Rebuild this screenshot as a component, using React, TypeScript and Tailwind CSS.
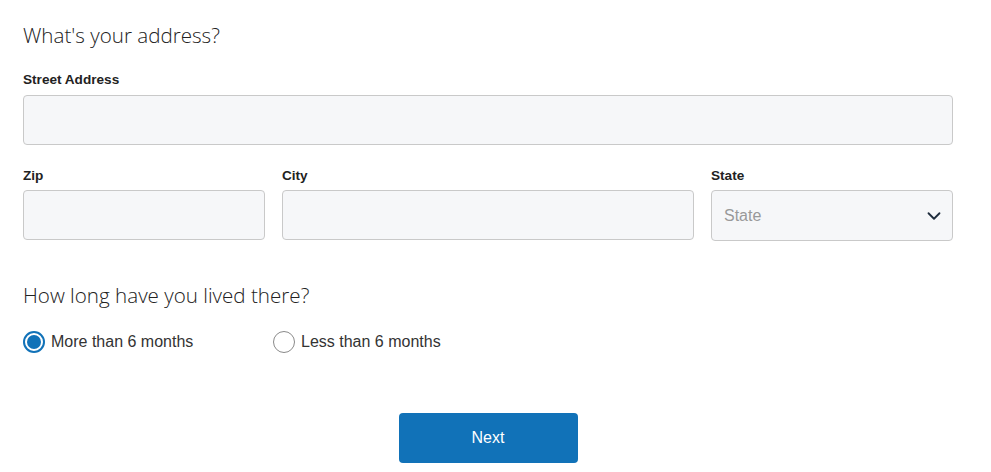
import React, { useState } from "react";
import { ChevronDown } from "lucide-react";

const heading = "font-['Open_Sans',sans-serif] font-light text-[20.6px] leading-[28px] text-[#222]";
const label = "block font-['Liberation_Sans',Arial,sans-serif] font-bold text-[13.6px] leading-[16px] text-[#222]";
const field =
  "w-full h-[50px] rounded-[4px] border border-[#c9c9c9] bg-[#f6f7f9] px-3 font-['Liberation_Sans',Arial,sans-serif] text-[16px] text-[#333] outline-none";

function Radio({ checked, text, onClick }: { checked: boolean; text: string; onClick: () => void }) {
  return (
    <button type="button" onClick={onClick} className="flex items-center gap-[6px] w-[250px]">
      {checked ? (
        <span className="flex items-center justify-center w-[22px] h-[22px] rounded-full border-2 border-[#1172b8] bg-white">
          <span className="w-[14px] h-[14px] rounded-full bg-[#1172b8]" />
        </span>
      ) : (
        <span className="w-[22px] h-[22px] rounded-full border border-[#8a8a8a] bg-white" />
      )}
      <span className="font-['Liberation_Sans',Arial,sans-serif] text-[16px] text-[#333]">{text}</span>
    </button>
  );
}

export default function App() {
  const [duration, setDuration] = useState("more");

  return (
    <main className="min-h-[472px] bg-white pl-[23px] pr-[38px] pt-[21px]">
      <h2 className={heading}>What's your address?</h2>

      <div className="mt-[23px]">
        <label className={label}>Street Address</label>
        <input className={`${field} mt-[7px]`} />
      </div>

      <div className="mt-[23px] flex gap-[17px]">
        <div className="w-[242px] shrink-0">
          <label className={label}>Zip</label>
          <input className={`${field} mt-[6px]`} />
        </div>
        <div className="flex-1">
          <label className={label}>City</label>
          <input className={`${field} mt-[6px]`} />
        </div>
        <div className="w-[242px] shrink-0">
          <label className={label}>State</label>
          <div className={`${field} mt-[6px] h-[51px] pr-[7px] flex items-center justify-between`}>
            <span className="text-[#999]">State</span>
            <ChevronDown size={22} strokeWidth={2} className="text-[#1f2d3d]" />
          </div>
        </div>
      </div>

      <h2 className={`${heading} mt-[40px]`}>How long have you lived there?</h2>

      <div className="mt-[21px] flex">
        <Radio checked={duration === "more"} text="More than 6 months" onClick={() => setDuration("more")} />
        <Radio checked={duration === "less"} text="Less than 6 months" onClick={() => setDuration("less")} />
      </div>

      <div className="mt-[59px] flex justify-center">
        <button
          type="button"
          className="w-[179px] h-[50px] rounded-[4px] bg-[#1172b8] text-white font-['Liberation_Sans',Arial,sans-serif] text-[16px]"
        >
          Next
        </button>
      </div>
    </main>
  );
}
